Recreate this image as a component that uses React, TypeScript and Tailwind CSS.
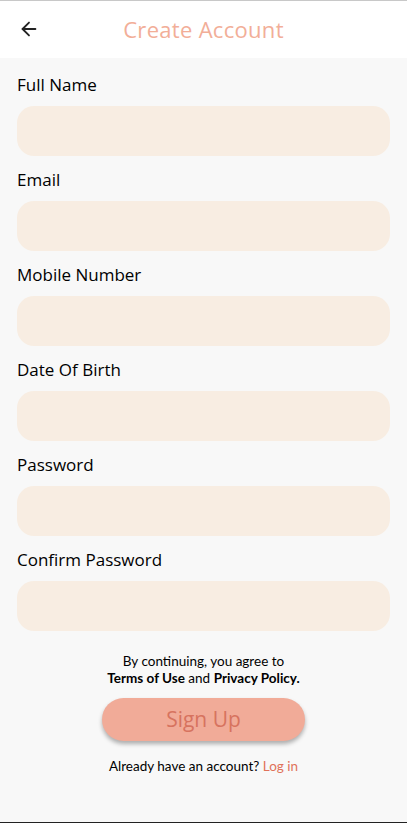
import { ArrowLeft } from "lucide-react";

const fields = [
  "Full Name",
  "Email",
  "Mobile Number",
  "Date Of Birth",
  "Password",
  "Confirm Password",
];

const CreateAccount = () => {
  return (
    <div className="h-[823px] w-full flex flex-col bg-[#f8f8f8] border-t border-[#c8c8c8] border-b border-b-[#222] font-['Open_Sans',sans-serif]">
      {/* Header */}
      <div className="h-[57px] bg-white flex items-center relative">
        <button className="absolute left-[18px] top-[17px] text-[#222]">
          <ArrowLeft size={22} strokeWidth={2} />
        </button>
        <h1 className="w-full text-center text-[22px] text-[#f2ae98] font-medium tracking-[0.3px]">
          Create Account
        </h1>
      </div>

      {/* Form */}
      <div className="flex flex-col px-[17px] pt-[15px]">
        {fields.map((label) => (
          <div key={label} className="flex flex-col mb-[12px]">
            <label className="text-[17px] leading-[24px] text-black font-medium">
              {label}
            </label>
            <input
              type="text"
              className="mt-[9px] h-[50px] w-full rounded-[17px] bg-[#f8ede2] outline-none px-4"
            />
          </div>
        ))}
      </div>

      {/* Footer */}
      <div className="flex flex-col items-center mt-[10px] font-['Lato',sans-serif] text-[13.5px] text-black">
        <p className="leading-[17px] text-center">
          By continuing, you agree to
          <br />
          <span className="font-bold">Terms of Use</span> and{" "}
          <span className="font-bold">Privacy Policy.</span>
        </p>
        <button className="mt-[11px] w-[203px] h-[43px] rounded-full bg-[#f1ab98] shadow-[0_3px_4px_rgba(0,0,0,0.3)] text-[21px] font-medium text-[#d7735f] font-['Open_Sans',sans-serif]">
          Sign Up
        </button>
        <p className="mt-[17px] leading-[17px]">
          Already have an account? <span className="text-[#e0725a]">Log in</span>
        </p>
      </div>
    </div>
  );
};

export default function App() {
  return <CreateAccount />;
}
